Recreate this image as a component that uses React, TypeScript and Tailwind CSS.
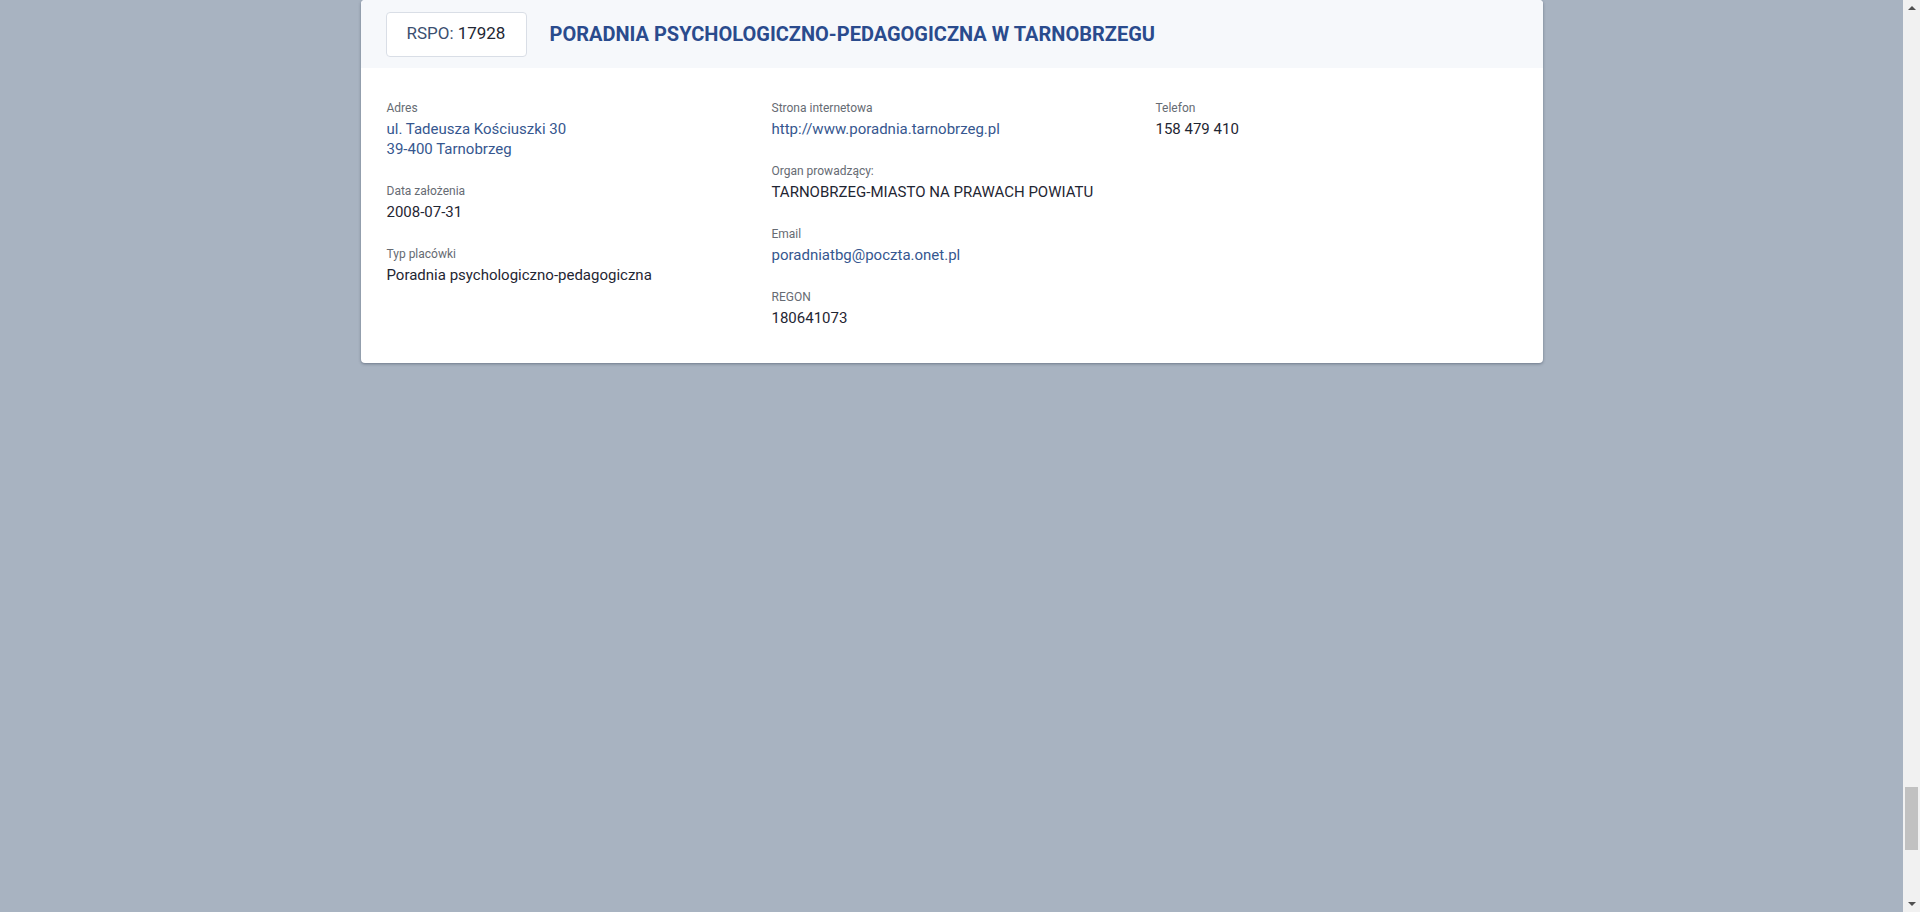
const leftItems = [
  { label: "Adres", lines: ["ul. Tadeusza Kościuszki 30", "39-400 Tarnobrzeg"], link: true },
  { label: "Data założenia", lines: ["2008-07-31"] },
  { label: "Typ placówki", lines: ["Poradnia psychologiczno-pedagogiczna"] },
];

const middleItems = [
  { label: "Strona internetowa", lines: ["http://www.poradnia.tarnobrzeg.pl"], link: true },
  { label: "Organ prowadzący:", lines: ["TARNOBRZEG-MIASTO NA PRAWACH POWIATU"] },
  { label: "Email", lines: ["poradniatbg@poczta.onet.pl"], link: true },
  { label: "REGON", lines: ["180641073"] },
];

const rightItems = [{ label: "Telefon", lines: ["158 479 410"] }];

type Item = { label: string; lines: string[]; link?: boolean };

function Field({ item }: { item: Item }) {
  return (
    <div className="flex flex-col gap-[3px]">
      <span className="text-[12px] leading-4 text-[#666b73]">{item.label}</span>
      <div className={item.link ? "text-[15px] leading-5 text-[#36578f]" : "text-[15px] leading-5 text-[#1f2633]"}>
        {item.lines.map((line, i) => (
          <div key={i}>{line}</div>
        ))}
      </div>
    </div>
  );
}

function Column({ items }: { items: Item[] }) {
  return (
    <div className="flex flex-col gap-6">
      {items.map((item, i) => (
        <Field key={i} item={item} />
      ))}
    </div>
  );
}

export default function App() {
  return (
    <div
      className="flex h-screen w-full overflow-hidden bg-[#a8b3c1]"
      style={{ fontFamily: "Roboto, 'Liberation Sans', sans-serif" }}
    >
      <div className="flex flex-1 justify-center">
        <div className="h-fit w-[1182px] overflow-hidden rounded-[4px] bg-white shadow-[0_1px_3px_rgba(40,50,70,0.45)]">
          <div className="flex h-[68px] items-center gap-[23px] bg-[#f6f8fb] pl-[25px]">
            <div className="flex h-[45px] w-[141px] items-center justify-center rounded-[4px] border border-[#d9dee6] bg-white text-[17px]">
              <span className="text-[#3b4f70]">RSPO:</span>
              <span className="ml-1 text-[#222733]">17928</span>
            </div>
            <h1 className="text-[20px] font-bold text-[#2a4b8d]">PORADNIA PSYCHOLOGICZNO-PEDAGOGICZNA W TARNOBRZEGU</h1>
          </div>
          <div className="grid grid-cols-[385px_384px_1fr] pb-[35px] pl-[26px] pt-[32px]">
            <Column items={leftItems} />
            <Column items={middleItems} />
            <Column items={rightItems} />
          </div>
        </div>
      </div>
      <div className="flex w-[17px] flex-col items-center bg-[#f1f1f1]">
        <div className="mt-[6px] h-0 w-0 border-x-[4px] border-b-[4px] border-x-transparent border-b-[#505050]" />
        <div className="flex-1" />
        <div className="mb-[52px] h-[63px] w-[13px] bg-[#c1c1c1]" />
        <div className="mb-[6px] h-0 w-0 border-x-[4px] border-t-[4px] border-x-transparent border-t-[#505050]" />
      </div>
    </div>
  );
}
